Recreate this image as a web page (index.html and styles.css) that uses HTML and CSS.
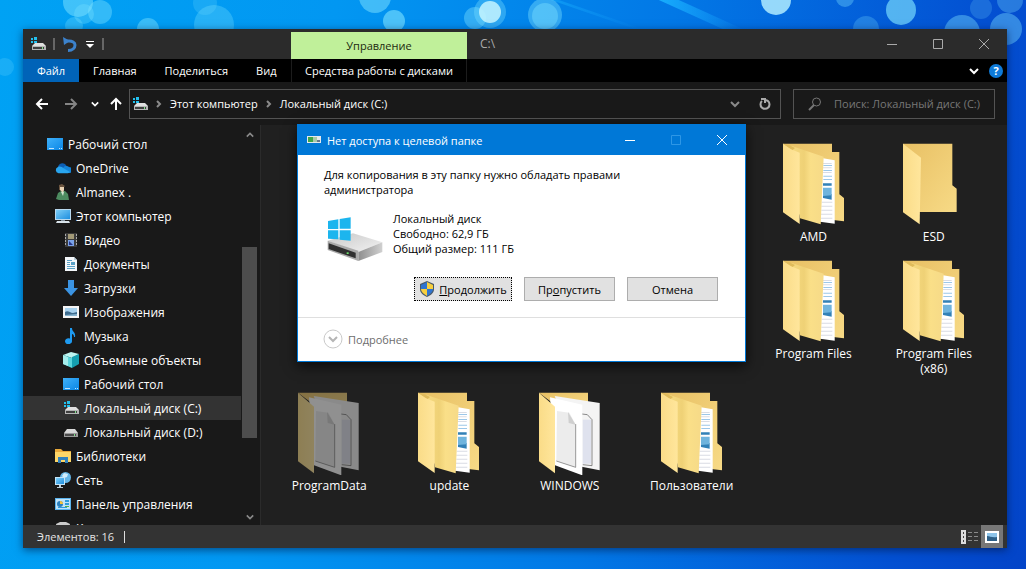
FILE: index.html
```html
<!DOCTYPE html>
<html lang="ru">
<head>
<meta charset="utf-8">
<title>C:\</title>
<link rel="stylesheet" href="styles.css">
</head>
<body>
<svg class="sprites" aria-hidden="true">
  <defs>
    <linearGradient id="gBack" x1="0" y1="0" x2="1" y2="1"><stop offset="0" stop-color="#e8c064"/><stop offset="1" stop-color="#f7da86"/></linearGradient>
    <linearGradient id="gFlap" x1="0" y1="0" x2="1" y2="0"><stop offset="0" stop-color="#fadc88"/><stop offset="1" stop-color="#ffe69c"/></linearGradient>
    <linearGradient id="gInner" x1="0" y1="0" x2="1" y2="0"><stop offset="0" stop-color="#f6da80"/><stop offset="0.4" stop-color="#efd176"/><stop offset="0.6" stop-color="#fadf88"/><stop offset="1" stop-color="#f6da88"/></linearGradient>
    <linearGradient id="gScreen" x1="0" y1="0" x2="1" y2="1"><stop offset="0" stop-color="#7ccdf7"/><stop offset="1" stop-color="#1e8fe0"/></linearGradient>
    <linearGradient id="gDesk" x1="0" y1="0" x2="1" y2="1"><stop offset="0" stop-color="#3fb1fa"/><stop offset="1" stop-color="#0a86e6"/></linearGradient>
    <linearGradient id="gTop" x1="0" y1="0" x2="1" y2="1"><stop offset="0" stop-color="#c9c9c9"/><stop offset="1" stop-color="#f2f2f2"/></linearGradient>
    <linearGradient id="gSide" x1="0" y1="0" x2="1" y2="0"><stop offset="0" stop-color="#8f8f8f"/><stop offset="1" stop-color="#d0d0d0"/></linearGradient>
  </defs>
  <symbol id="folder-full" viewBox="0 0 192 249">
    <path fill="url(#gBack)" d="M3 2h147v25h22v127l14 11v70l-26-3L3 206z"/>
    <path fill="#fff" d="M119 45l39 7v190l-44-6z"/>
    <path fill="#d9dce4" d="M123 60h26v3h-26zM123 73h26v3h-26zM123 87h26v3h-26zM119 176h32v3h-32zM118 188h33v3h-33zM118 200h33v3h-33zM117 212h34v3h-34zM117 224h34v3h-34z"/>
    <path fill="#9cc7e8" d="M124 66h26v3h-26zM124 81h26v3h-26zM124 98h26v3h-26zM124 108h26v3h-26z"/>
    <path fill="#3281b7" d="M123 121h26v7h-26zM123 153h26v17l-26-5z"/>
    <path fill="#6fb4dd" d="M123 134h26v23l-26 2z"/>
    <path fill="url(#gInner)" d="M27 8l98 33-9 203-62-18z"/>
    <path fill="url(#gFlap)" d="M3 2l24 17 26 10v214L3 208z"/>
    <path fill="#dfbb5c" d="M3 2l29 19 7-6-16-8z"/>
  </symbol>
  <symbol id="folder-empty" viewBox="0 0 192 249">
    <path fill="url(#gBack)" d="M3 2h148v125l13 10v70H3z"/>
    <path fill="url(#gFlap)" d="M3 2l54 42-4 200L3 208z"/>
  </symbol>
  <symbol id="folder-docs" viewBox="0 0 192 249">
    <path fill="url(#gBack)" d="M3 2h147v40L80 60z"/>
    <path fill="#f4f4f4" d="M50 12l135 21v202l-54-11z"/>
    <path fill="none" stroke="#555" stroke-width="2" d="M132 66l16 2 14 15v138l-28-3"/>
    <path fill="#dfe2ee" d="M134 83h25v132h-25z"/>
    <path fill="#fff" d="M36 16l97 22v212l-82-30z"/>
    <path fill="#ececec" d="M57 57l37 5 18 34v130l-57-19z"/>
    <path fill="none" stroke="#666" stroke-width="2" d="M55 207l58 19V96"/>
    <path fill="#cfcfcf" d="M90 60l23 38-21-5z"/>
    <path fill="url(#gFlap)" d="M3 2l48 42v200L3 208z"/>
  </symbol>
  <symbol id="drive" viewBox="0 0 16 16"><path fill="#d8d8d8" d="M4 5h8l3 4H1z"/><path fill="#9a9a9a" d="M1 9h14v4H1z"/><path fill="#4c4c4c" d="M2 10h11v2H2z"/><path fill="#7fe08a" d="M11 10h1v2h-1z"/></symbol>
  <symbol id="drive-win" viewBox="0 0 16 16"><path fill="#23c0ee" d="M1 2h2v2H1zM4 1h3v3H4zM1 5h2v2H1zM4 5h3v2H4z"/><path fill="#e0e0e0" d="M5 7h8l3 3H2z"/><path fill="#b5b5b5" d="M2 10h14v4H2z"/><path fill="#3f3f3f" d="M3 11h11v2H3z"/><path fill="#7fe08a" d="M12 11h1v2h-1z"/></symbol>
  <symbol id="desk" viewBox="0 0 16 16"><path fill="url(#gDesk)" d="M0 2h16v12H0z"/><path fill="#bfe4ff" d="M2 12h5v1H2zM12 12h1v1h-1zM14 12h1v1h-1z"/></symbol>
  <symbol id="cloud" viewBox="0 0 16 16"><path fill="#0d5fb4" d="M3 8a4.500 4.500 0 0 1 8-3l2 4-9 3z"/><path fill="#1484d8" d="M8 8a4 4 0 0 1 6-1 3 3 0 0 1 0 6H8z"/><path fill="#29a5ee" d="M3 7c2-1 4 0 6 1.500L15 12c-1 1-2 1.200-3 1.200H3.500A3.200 3.200 0 0 1 3 7z"/></symbol>
  <symbol id="user" viewBox="0 0 16 16"><path fill="#4d8b60" d="M1 15l2-6 3-2h4l3 3 1 6H4z"/><path fill="#e9d3b5" d="M5 2h4v4l-1 3-3-3z"/><path fill="#6b5540" d="M4 1l3-1 3 2-1 1H5v3H4z"/><path fill="#cfe3d0" d="M6 8l2 4 1-4z"/></symbol>
  <symbol id="pc" viewBox="0 0 16 16"><path fill="#b9d9ef" d="M0 1h16v11H0z"/><path fill="url(#gScreen)" d="M1 2h14v9H1z"/><path fill="#7b8b98" d="M6 12h4v1H6z"/><path fill="#d8e2e9" d="M2 13h12l1 2H1z"/></symbol>
  <symbol id="video" viewBox="0 0 16 16"><path fill="#3b3b3b" d="M2 1h12v14H2z"/><path fill="#a39a78" d="M5 2h6v5H5z"/><path fill="#7ba3e8" d="M5 8h6v6H5z"/><path fill="#aaa" d="M2 2h1v2H2zM2 5h1v2H2zM2 8h1v2H2zM2 11h1v2H2zM13 2h1v2h-1zM13 5h1v2h-1zM13 8h1v2h-1zM13 11h1v2h-1z"/><path fill="#26368a" d="M6 9l4 4H6z"/></symbol>
  <symbol id="doc" viewBox="0 0 16 16"><path fill="#f4f7fa" d="M2 1h9l3 3v11H2z"/><path fill="#5aa2c7" d="M4 4h5v1H4zM4 6h3v1H4zM8 6h4v3H8zM4 8h3v1H4zM4 10h8v1H4zM4 12h8v1H4z"/><path fill="#b8ccd8" d="M11 1l3 3h-3z"/></symbol>
  <symbol id="down" viewBox="0 0 16 16"><path fill="#3b94e3" d="M5 0h6v8h4l-7 8-7-8h4z"/></symbol>
  <symbol id="image" viewBox="0 0 16 16"><path fill="#f5f5f5" d="M0 2h16v12H0z"/><path fill="#a8d2ef" d="M2 4h12v8H2z"/><path fill="#3d6b8d" d="M2 8c3-2 5 1 8 1l4-1v4H2z"/><path fill="#86b4d1" d="M2 11l12-1v2H2z"/></symbol>
  <symbol id="music" viewBox="0 0 16 16"><path fill="#1e9af0" d="M7 0h2c0 4 4 4 3 9h-1c0-2-1-3-2-3v7a3.500 3 0 1 1-2-2.500z"/></symbol>
  <symbol id="cube" viewBox="0 0 16 16"><path fill="#bdf5f0" d="M0 3l8-3 8 2-7 4z"/><path fill="#15a0b0" d="M9 5l7-3v10l-7 4z"/><path fill="#5ad6dc" d="M0 3l9 3v10l-9-4z"/><path fill="#a5eeec" d="M0 3l5 2v9l-5-2z"/></symbol>
  <symbol id="library" viewBox="0 0 16 16"><path fill="#e9a93a" d="M0 1h6l2 2h8v11H0z"/><path fill="#fdd668" d="M0 4h16v10H0z"/><path fill="#3181bd" d="M3 9h10v6h-3v-3H6v3H3z"/></symbol>
  <symbol id="network" viewBox="0 0 16 16"><circle cx="10.500" cy="5.500" r="5.500" fill="#64b5e6"/><path fill="#d1ecfa" d="M9 1l4 1-1 3-3 1-2-2z"/><path fill="#c5e5f8" d="M0 5h10v8H0z"/><path fill="url(#gScreen)" d="M1 6h8v6H1z"/><path fill="#bed0da" d="M4 13h2v2h2v1H2v-1h2z"/></symbol>
  <symbol id="control" viewBox="0 0 16 16"><path fill="#5bb4ee" d="M0 2h16v12H0z"/><path fill="#bfe2f8" d="M1 3h14v10H1z"/><circle cx="5" cy="8" r="3" fill="#2b7fbd"/><path fill="#f4c23c" d="M5 8V5a3 3 0 0 1 3 3z"/><path fill="#2b9bdd" d="M10 4h4v2h-4zM10 7h4v2h-4zM3 11h9v1H3z"/><path fill="#55b04a" d="M10 10h4v1h-4z"/></symbol>
  <symbol id="bin" viewBox="0 0 16 16"><path fill="#ccc" d="M1 4l4-2h6l4 2-2 11H3z"/></symbol>
  <symbol id="chevron" viewBox="0 0 10 10"><path fill="none" stroke="currentColor" stroke-width="2" d="M1 3l4 4 4-4"/></symbol>
  <symbol id="crumb" viewBox="0 0 10 10"><path fill="none" stroke="currentColor" stroke-width="2" d="M3 2l3 3-3 3"/></symbol>
</svg>

<main class="desktop">
  <svg class="wallpaper" viewBox="0 0 1026 569" preserveAspectRatio="xMidYMin slice" aria-hidden="true">
    <defs>
      <linearGradient id="gRay"><stop offset="0" stop-color="#19b4ff"/><stop offset="1" stop-color="#1da8ff" stop-opacity="0"/></linearGradient>
    </defs>
    <path fill="url(#gRay)" d="M650-4h20l75 34h-20z"/>
    <path fill="url(#gRay)" opacity=".5" d="M545-2h8l90 31h-8z"/>
    <g fill="#7fe3ff">
      <circle cx="78" cy="2" r="15" opacity=".5"/><circle cx="100" cy="12" r="12" opacity=".4"/><circle cx="84" cy="14" r="10" opacity=".3"/><circle cx="74" cy="26" r="9" opacity=".3"/>
      <circle cx="148" cy="29" r="11" opacity=".45"/><circle cx="214" cy="25" r="20" opacity=".3"/><circle cx="205" cy="3" r="12" opacity=".2"/>
      <circle cx="375" cy="-3" r="16" opacity=".5"/><circle cx="394" cy="21" r="11" opacity=".6"/>
      <circle cx="475" cy="18" r="11" opacity=".4"/><circle cx="490" cy="12" r="16" opacity=".35"/><circle cx="490" cy="12" r="11" fill="#c5f4ff" opacity=".85"/>
      <circle cx="545" cy="15" r="17" opacity=".4"/><circle cx="545" cy="16" r="13" opacity=".4"/>
      <circle cx="776" cy="0" r="15" fill="#b0ecff" opacity=".85"/><circle cx="901" cy="10" r="15" opacity=".65"/>
      <circle cx="845" cy="-2" r="9" opacity=".35"/><circle cx="866" cy="29" r="13" opacity=".25"/>
      <circle cx="962" cy="33" r="18" opacity=".4"/><circle cx="981" cy="8" r="11" opacity=".2"/><circle cx="1010" cy="0" r="13" opacity=".3"/><circle cx="1006" cy="29" r="16" opacity=".4"/>
      <circle cx="5" cy="67" r="9" opacity=".2"/>
    </g>
  </svg>

  <section class="explorer" aria-label="Проводник">
    <header class="titlebar">
      <div class="quick">
        <svg class="ico"><use href="#drive-win"/></svg>
        <span class="bar"></span>
        <button class="bare" aria-label="Отменить"><svg class="ico" viewBox="0 0 16 16"><path fill="none" stroke="#3c82cc" stroke-width="3" d="M6 14.500c5 0 7-3 7-5.500s-3-4-6-4H3"/><path fill="#3c82cc" d="M1 1l1 8 6-4z"/></svg></button>
        <button class="bare" aria-label="Настройка панели"><svg class="ico-s" viewBox="0 0 10 10"><path fill="#fff" d="M1 2h8v1H1zM1 5h8L5 9z"/></svg></button>
        <span class="bar"></span>
      </div>
      <div class="context-head">Управление</div>
      <h1 class="win-title">C:\</h1>
      <div class="controls">
        <button aria-label="Свернуть"><svg viewBox="0 0 12 12"><path stroke="currentColor" d="M1 6.500h10"/></svg></button>
        <button aria-label="Развернуть"><svg viewBox="0 0 12 12"><path fill="none" stroke="currentColor" d="M1.500 1.500h9v9h-9z"/></svg></button>
        <button aria-label="Закрыть"><svg viewBox="0 0 12 12"><path stroke="currentColor" d="M1 1l10 10M11 1L1 11"/></svg></button>
      </div>
    </header>

    <nav class="ribbon">
      <div class="tabs">
        <button class="tab tab-file">Файл</button>
        <button class="tab">Главная</button>
        <button class="tab">Поделиться</button>
        <button class="tab">Вид</button>
      </div>
      <button class="tab tab-context">Средства работы с дисками</button>
      <div class="ribbon-end">
        <button class="bare" aria-label="Развернуть ленту"><svg class="ico-s"><use href="#chevron"/></svg></button>
        <button class="help" aria-label="Справка">?</button>
      </div>
    </nav>

    <div class="navbar">
      <div class="arrows">
        <button class="bare" aria-label="Назад"><svg class="ico-m" viewBox="0 0 14 14"><path fill="none" stroke="#fff" stroke-width="2" d="M13 7H2M7 2L2 7l5 5"/></svg></button>
        <button class="bare" aria-label="Вперёд"><svg class="ico-m" viewBox="0 0 14 14"><path fill="none" stroke="#858585" stroke-width="2" d="M1 7h11M7 2l5 5-5 5"/></svg></button>
        <button class="bare" aria-label="Недавние"><svg class="ico-xs"><use href="#chevron"/></svg></button>
        <button class="bare" aria-label="Вверх"><svg class="ico-m" viewBox="0 0 14 14"><path fill="none" stroke="#fff" stroke-width="2" d="M7 13V2M2 7l5-5 5 5"/></svg></button>
      </div>
      <div class="address">
        <svg class="ico"><use href="#drive-win"/></svg>
        <svg class="ico-s dim"><use href="#crumb"/></svg>
        <a href="#pc-root">Этот компьютер</a>
        <svg class="ico-s dim"><use href="#crumb"/></svg>
        <a href="#disk-c">Локальный диск (C:)</a>
        <div class="address-end">
          <button class="bare dim" aria-label="Список"><svg class="ico-s"><use href="#chevron"/></svg></button>
          <button class="bare dim" aria-label="Обновить"><svg class="ico-m" viewBox="0 0 14 14"><path fill="none" stroke="#aaa" stroke-width="2" d="M4 4a4.500 4.500 0 1 0 6 0L8 3M3 2h4v4"/></svg></button>
        </div>
      </div>
      <label class="search">
        <svg class="ico-m" viewBox="0 0 14 14"><circle cx="8.500" cy="5" r="4" fill="none" stroke="#777"/><path stroke="#777" stroke-width="2" d="M6 8l-5 5"/></svg>
        <input type="text" aria-label="Поиск" placeholder="Поиск: Локальный диск (C:)">
      </label>
    </div>

    <div class="content">
      <aside class="sidebar">
        <ul class="tree">
          <li><a class="lvl-0" href="#n1"><svg class="ico"><use href="#desk"/></svg>Рабочий стол</a></li>
          <li><a class="lvl-1" href="#n2"><svg class="ico"><use href="#cloud"/></svg>OneDrive</a></li>
          <li><a class="lvl-1" href="#n3"><svg class="ico"><use href="#user"/></svg>Almanex .</a></li>
          <li><a class="lvl-1" href="#n4"><svg class="ico"><use href="#pc"/></svg>Этот компьютер</a></li>
          <li><a class="lvl-2" href="#n5"><svg class="ico"><use href="#video"/></svg>Видео</a></li>
          <li><a class="lvl-2" href="#n6"><svg class="ico"><use href="#doc"/></svg>Документы</a></li>
          <li><a class="lvl-2" href="#n7"><svg class="ico"><use href="#down"/></svg>Загрузки</a></li>
          <li><a class="lvl-2" href="#n8"><svg class="ico"><use href="#image"/></svg>Изображения</a></li>
          <li><a class="lvl-2" href="#n9"><svg class="ico"><use href="#music"/></svg>Музыка</a></li>
          <li><a class="lvl-2" href="#n10"><svg class="ico"><use href="#cube"/></svg>Объемные объекты</a></li>
          <li><a class="lvl-2" href="#n11"><svg class="ico"><use href="#desk"/></svg>Рабочий стол</a></li>
          <li><a class="lvl-2 current" href="#n12"><svg class="ico"><use href="#drive-win"/></svg>Локальный диск (C:)</a></li>
          <li><a class="lvl-2" href="#n13"><svg class="ico"><use href="#drive"/></svg>Локальный диск (D:)</a></li>
          <li><a class="lvl-1" href="#n14"><svg class="ico"><use href="#library"/></svg>Библиотеки</a></li>
          <li><a class="lvl-1" href="#n15"><svg class="ico"><use href="#network"/></svg>Сеть</a></li>
          <li><a class="lvl-1" href="#n16"><svg class="ico"><use href="#control"/></svg>Панель управления</a></li>
          <li><a class="lvl-1" href="#n17"><svg class="ico"><use href="#bin"/></svg>Корзина</a></li>
        </ul>
        <div class="scroll" aria-hidden="true">
          <svg class="ico-xs flip"><use href="#chevron"/></svg>
          <div class="track"><div class="thumb"></div></div>
          <svg class="ico-xs"><use href="#chevron"/></svg>
        </div>
      </aside>
      <div class="files">
        <a class="file row-start" href="#amd"><svg><use href="#folder-full"/></svg>AMD</a>
        <a class="file" href="#esd"><svg><use href="#folder-empty"/></svg>ESD</a>
        <a class="file row-start" href="#pf"><svg><use href="#folder-full"/></svg>Program Files</a>
        <a class="file" href="#pf86"><svg><use href="#folder-full"/></svg>Program Files (x86)</a>
        <a class="file" href="#pd"><svg class="faded"><use href="#folder-docs"/></svg>ProgramData</a>
        <a class="file" href="#up"><svg><use href="#folder-full"/></svg>update</a>
        <a class="file" href="#win"><svg><use href="#folder-docs"/></svg>WINDOWS</a>
        <a class="file" href="#users"><svg><use href="#folder-full"/></svg>Пользователи</a>
      </div>
    </div>

    <footer class="status">
      <span class="count">Элементов: 16</span>
      <button class="view" aria-label="Таблица"><svg viewBox="0 0 18 14"><path fill="#ddd" d="M0 0h5v14H0z"/><path fill="#444" d="M2 2h1v2H2zM2 6h1v2H2zM2 10h1v2H2z"/><path stroke="#8a8a8a" d="M7 2.500h4M13 2.500h4M7 6.500h4M13 6.500h4M7 10.500h4M13 10.500h4"/></svg></button>
      <button class="view view-on" aria-label="Значки"><svg viewBox="0 0 14 12"><path fill="#fff" d="M0 0h14v12H0z"/><path fill="#8dc4ea" d="M2 2h10v8H2z"/><path fill="#2d5f87" d="M2 5c3 0 5 2 10 1v4H2z"/></svg></button>
    </footer>
  </section>

  <section class="dialog" role="dialog" aria-labelledby="dlg-title">
    <header class="dlg-head">
      <svg class="ico" viewBox="0 0 16 16"><path fill="#e4e8ec" d="M1 4h14v7H1z"/><path fill="#3fa548" d="M2 5h5v5H2z"/><path fill="#a9c8a9" d="M7 5h4v5H7z"/><path fill="#65778c" d="M11 8h3v2h-3z"/></svg>
      <h2 id="dlg-title">Нет доступа к целевой папке</h2>
      <div class="controls controls-dlg">
        <button aria-label="Свернуть"><svg viewBox="0 0 12 12"><path stroke="currentColor" d="M1 6.500h10"/></svg></button>
        <button aria-label="Развернуть" disabled><svg viewBox="0 0 12 12"><path fill="none" stroke="currentColor" d="M1.500 1.500h9v9h-9z"/></svg></button>
        <button aria-label="Закрыть"><svg viewBox="0 0 12 12"><path stroke="currentColor" d="M1 1l10 10M11 1L1 11"/></svg></button>
      </div>
    </header>
    <div class="dlg-body">
      <p class="dlg-text">Для копирования в эту папку нужно обладать правами администратора</p>
      <div class="disk">
        <svg class="disk-ico" viewBox="0 0 168 132" aria-hidden="true">
          <path fill="url(#gTop)" d="M2 71l76-22 88 27-72 29z"/>
          <path fill="url(#gSide)" d="M94 105l72-29v29l-72 27z"/>
          <path fill="#aaa" d="M2 71l92 30v31L2 99z"/>
          <path fill="#303030" d="M5 79l81 28v17L5 96z"/>
          <path fill="#6ee16d" d="M59 106h6v5h-6z"/>
          <path fill="#1cb5ee" d="M3 12l31-5v29H3zM38 6l33-5v34H38zM3 40h31v27l-31-2zM38 40h33v31l-33-3z"/>
        </svg>
        <div class="disk-info">Локальный диск<br>Свободно: 62,9 ГБ<br>Общий размер: 111 ГБ</div>
      </div>
      <div class="actions">
        <button class="btn btn-focus"><svg class="ico" viewBox="0 0 16 16"><path fill="#4b5a68" d="M8 0l7 3v5c0 4-3 6-7 8-4-2-7-4-7-8V3z"/><path fill="#2f74d0" d="M8 1v7H2V4z"/><path fill="#f7cf3e" d="M8 1v7h6V4z"/><path fill="#f7cf3e" d="M2 8h6v7c-3-2-6-4-6-7z"/><path fill="#2f74d0" d="M14 8H8v7c3-2 6-4 6-7z"/></svg><span><u>П</u>родолжить</span></button>
        <button class="btn"><span>Пр<u>о</u>пустить</span></button>
        <button class="btn">Отмена</button>
      </div>
    </div>
    <footer class="dlg-foot">
      <button class="more"><svg viewBox="0 0 20 20"><circle cx="10" cy="10" r="9" fill="none" stroke="#c9c9c9"/><path fill="none" stroke="#b5b5b5" stroke-width="2" d="M6 8l4 4 4-4"/></svg>Подробнее</button>
    </footer>
  </section>
</main>
</body>
</html>
```

FILE: styles.css
```css
* { box-sizing: border-box; }

body {
  margin: 0;
  font: 11px/15px "Open Sans", "Noto Sans", sans-serif;
  color: #fff;
}

button {
  font: inherit;
  color: inherit;
  border: 0;
  padding: 0;
  background: none;
}

a { color: inherit; text-decoration: none; }
svg { display: block; flex: none; }
.sprites { position: absolute; width: 0; height: 0; }

.ico { width: 16px; height: 16px; }
.ico-m { width: 14px; height: 14px; }
.ico-s { width: 10px; height: 10px; }
.ico-xs { width: 8px; height: 8px; }
.dim { color: #8a8a8a; }
.flip { transform: rotate(180deg); }
.bare { display: flex; align-items: center; justify-content: center; }

.desktop {
  position: relative;
  display: flex;
  min-height: 100vh;
  padding: 29px 19px 21px 23px;
  overflow: hidden;
  background: linear-gradient(100deg, #00a2f4 0%, #0297f2 30%, #0278e6 60%, #0350d2 88%, #0344c8 100%);
}

.wallpaper { position: absolute; inset: 0; width: 100%; height: 100%; }

.explorer {
  position: relative;
  flex: 1;
  display: flex;
  flex-direction: column;
  min-width: 0;
  height: calc(100vh - 50px);
  background: #191919;
  box-shadow: 0 2px 8px rgba(0, 20, 60, .6);
}

/* Title bar */
.titlebar { display: flex; height: 30px; background: #2b2b2b; }
.quick { display: flex; align-items: center; gap: 7px; width: 268px; padding-left: 7px; }
.bar { width: 2px; height: 12px; background: #666; }
.context-head {
  display: flex;
  align-items: center;
  justify-content: center;
  width: 176px;
  margin-top: 3px;
  background: #c0f09a;
  color: #1c2a10;
}
.win-title { flex: 1; margin: 0; padding-left: 13px; font: inherit; font-size: 12px; line-height: 30px; color: #aaa; }
.controls { display: flex; color: #aaa; }
.controls button { display: flex; align-items: center; justify-content: center; width: 46px; }
.controls svg { width: 12px; height: 12px; }

/* Ribbon */
.ribbon { display: flex; height: 23px; background: #000; }
.tabs { display: flex; width: 268px; }
.tab { flex: none; padding: 0 14px; white-space: nowrap; }
.tab-file { width: 56px; padding: 0; background: #0063b8; }
.tab-context { width: 176px; padding: 0; border: solid #1c1c1c; border-width: 0 1px; }
.ribbon-end { display: flex; align-items: center; gap: 10px; margin-left: auto; padding-right: 4px; }
.help { width: 14px; height: 14px; border-radius: 7px; background: #0f7ad8; font-weight: 700; line-height: 14px; }

/* Navigation bar */
.navbar { display: flex; align-items: center; height: 43px; padding-right: 12px; }
.arrows { display: flex; align-items: center; gap: 13px; width: 106px; padding-left: 12px; }
.arrows button:nth-child(1) { margin-right: 2px; }
.arrows button:last-child { margin-left: -3px; }
.address {
  flex: 1;
  display: flex;
  align-items: center;
  gap: 6px;
  height: 30px;
  padding: 0 8px 0 2px;
  border: 1px solid #535353;
}
.address-end { display: flex; gap: 18px; margin-left: auto; }
.search {
  display: flex;
  align-items: center;
  gap: 12px;
  width: 202px;
  height: 30px;
  margin-left: 12px;
  padding: 0 6px 0 14px;
  border: 1px solid #535353;
}
.search input { flex: 1; min-width: 0; padding: 0; border: 0; background: none; color: #fff; font: inherit; }
.search input::placeholder { color: #777; opacity: 1; }

/* Content */
.content { flex: 1; display: flex; min-height: 0; font-size: 12px; }
.sidebar { display: flex; width: 238px; overflow: hidden; border-right: 1px solid #2b2b2b; }
.tree { flex: 1; margin: 0; padding: 7px 0 0; list-style: none; }
.tree a { display: flex; align-items: center; gap: 5px; height: 24px; white-space: nowrap; }
.lvl-0 { padding-left: 24px; }
.lvl-1 { padding-left: 32px; }
.lvl-2 { padding-left: 40px; }
.tree .current { background: #333; }
.scroll {
  display: flex;
  flex-direction: column;
  align-items: center;
  width: 19px;
  padding: 6px 3px 4px 1px;
  color: #8a8a8a;
}
.track { flex: 1; display: flex; align-items: flex-end; width: 15px; padding-bottom: 75px; }
.thumb { width: 15px; height: 64%; background: #4d4d4d; }

.files {
  flex: 1;
  display: grid;
  grid-template-columns: repeat(6, 1fr);
  align-content: start;
  row-gap: 16px;
  padding: 18px 13px 0 8px;
  background: #202020;
}
.row-start { grid-column-start: 5; }
.file { display: flex; flex-direction: column; align-items: center; gap: 3px; padding: 0 20px; text-align: center; }
.file svg { width: 64px; height: 83px; }
.faded { opacity: .5; }

/* Status bar */
.status { display: flex; align-items: center; height: 23px; padding: 0 4px 0 14px; background: #333; }
.count { margin-right: auto; padding-right: 10px; border-right: 1px solid #ddd; line-height: 12px; color: #e4e4e4; }
.view { display: flex; align-items: center; justify-content: center; width: 22px; height: 23px; }
.view svg { width: 18px; height: 14px; }
.view-on { background: #777; }
.view-on svg { width: 14px; height: 12px; }

/* Dialog floating above the explorer window */
.dialog {
  position: absolute;
  top: 124px;
  left: 297px;
  width: 449px;
  border: 1px solid #0078d7;
  background: #fff;
  color: #000;
  box-shadow: 0 4px 12px rgba(0, 0, 0, .7);
}
.dlg-head { display: flex; align-items: center; gap: 5px; height: 30px; padding-left: 8px; background: #0078d7; color: #fff; }
.dlg-head h2 { flex: 1; margin: 0; font: inherit; }
.controls-dlg { height: 30px; color: #fff; }
.controls-dlg button:disabled { color: #2e97e6; }
.dlg-body { padding: 12px 27px 16px 26px; }
.dlg-text { margin: 0; padding-right: 70px; }
.disk { display: flex; gap: 10px; margin-top: 14px; padding-left: 3px; }
.disk-ico { width: 56px; height: 44px; margin-top: 6px; }
.actions { display: flex; justify-content: flex-end; gap: 12px; margin-top: 16px; }
.btn {
  display: flex;
  align-items: center;
  justify-content: center;
  gap: 4px;
  width: 91px;
  height: 24px;
  border: 1px solid #adadad;
  background: #e1e1e1;
}
.btn-focus { width: 98px; border: 1px dotted #000; }
.dlg-foot { padding: 11px 25px 12px; border-top: 1px solid #dfdfdf; }
.more { display: flex; align-items: center; gap: 5px; color: #6d6d6d; }
.more svg { width: 20px; height: 20px; }
```
